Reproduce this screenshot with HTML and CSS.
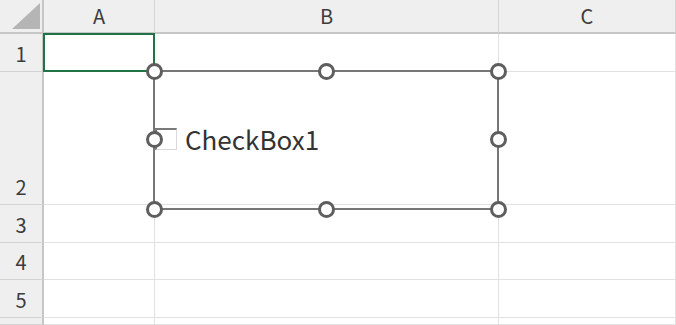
FILE: index.html
```html
<!DOCTYPE html>
<html lang="ja">
<head>
    <meta charset="UTF-8">
    <title>Sheet1</title>
    <link rel="stylesheet" href="styles.css">
</head>
<body>

<div id="sheet">
    <div class="corner"><div class="tri"></div></div>
    <div class="colHead">A</div>
    <div class="colHead">B</div>
    <div class="colHead">C</div>

    <div class="rowHead">1</div>
    <div class="cell sel"></div>
    <div class="cell"></div>
    <div class="cell"></div>

    <div class="rowHead">2</div>
    <div class="cell"></div>
    <div class="cell"></div>
    <div class="cell"></div>

    <div class="rowHead">3</div>
    <div class="cell"></div>
    <div class="cell"></div>
    <div class="cell"></div>

    <div class="rowHead">4</div>
    <div class="cell"></div>
    <div class="cell"></div>
    <div class="cell"></div>

    <div class="rowHead">5</div>
    <div class="cell"></div>
    <div class="cell"></div>
    <div class="cell"></div>

    <div class="rowHead"></div>
    <div class="cell"></div>
    <div class="cell"></div>
    <div class="cell"></div>

    <!-- form control floating over the grid -->
    <div id="shape">
        <div class="checkRow">
            <span class="checkBox"></span>
            <span class="checkLabel">CheckBox1</span>
        </div>
        <span class="handle h-tl"></span>
        <span class="handle h-tm"></span>
        <span class="handle h-tr"></span>
        <span class="handle h-ml"></span>
        <span class="handle h-mr"></span>
        <span class="handle h-bl"></span>
        <span class="handle h-bm"></span>
        <span class="handle h-br"></span>
    </div>
</div>

</body>
</html>
```

FILE: styles.css
```css
* {
    box-sizing: border-box;
}

html, body {
    margin: 0;
    background: #ffffff;
    font-family: "Noto Sans CJK JP", "Noto Sans", sans-serif;
    overflow: hidden;
}

#sheet {
    position: relative;
    display: grid;
    grid-template-columns: 44px 111px 344px 1fr;
    grid-template-rows: 34px 38px 133px 38px 37px 38px 7px;
    width: 676px;
    height: 325px;
}

.corner {
    background: #efefef;
    border-right: 2px solid #c6c6c6;
    border-bottom: 2px solid #c6c6c6;
    padding: 3px 0 0 12px;
}

.tri {
    width: 28px;
    height: 26px;
    background: #b5b5b5;
    clip-path: polygon(100% 0, 100% 100%, 0 100%);
}

.colHead {
    background: #efefef;
    border-right: 1px solid #d4d4d4;
    border-bottom: 2px solid #c6c6c6;
    color: #3c3c3c;
    font-size: 20px;
    text-align: center;
    line-height: 32px;
}

.rowHead {
    background: #efefef;
    border-right: 2px solid #c6c6c6;
    border-bottom: 1px solid #d4d4d4;
    color: #3c3c3c;
    font-size: 20px;
    display: flex;
    align-items: flex-end;
    justify-content: center;
    padding-bottom: 5px;
    line-height: 24px;
}

.cell {
    border-right: 1px solid #e1e1e1;
    border-bottom: 1px solid #e1e1e1;
}

.sel {
    position: relative;
}

.sel::after {
    content: "";
    position: absolute;
    left: -1px;
    top: -1px;
    right: -1px;
    bottom: -1px;
    border: 2px solid #217346;
}

#shape {
    position: absolute;
    left: 153px;
    top: 70px;
    width: 346px;
    height: 140px;
    border: 2px solid #767676;
    display: flex;
    align-items: center;
}

.checkRow {
    display: flex;
    align-items: center;
    gap: 8px;
    margin-top: -2px;
}

.checkBox {
    width: 22px;
    height: 22px;
    border-top: 2px solid #7a7a7a;
    border-left: 2px solid #7a7a7a;
    border-right: 1px solid #d9d9d9;
    border-bottom: 1px solid #d9d9d9;
    background: #ffffff;
}

.checkLabel {
    font-size: 26px;
    color: #333333;
    line-height: 30px;
}

.handle {
    position: absolute;
    width: 17px;
    height: 17px;
    border: 3px solid #5e5e5e;
    border-radius: 50%;
    background: #ffffff;
}

.h-tl { left: -9.5px; top: -9.5px; }
.h-tm { left: 162.5px; top: -9.5px; }
.h-tr { right: -9.5px; top: -9.5px; }
.h-ml { left: -9.5px; top: 58.5px; }
.h-mr { right: -9.5px; top: 58.5px; }
.h-bl { left: -9.5px; bottom: -9.5px; }
.h-bm { left: 162.5px; bottom: -9.5px; }
.h-br { right: -9.5px; bottom: -9.5px; }
```
